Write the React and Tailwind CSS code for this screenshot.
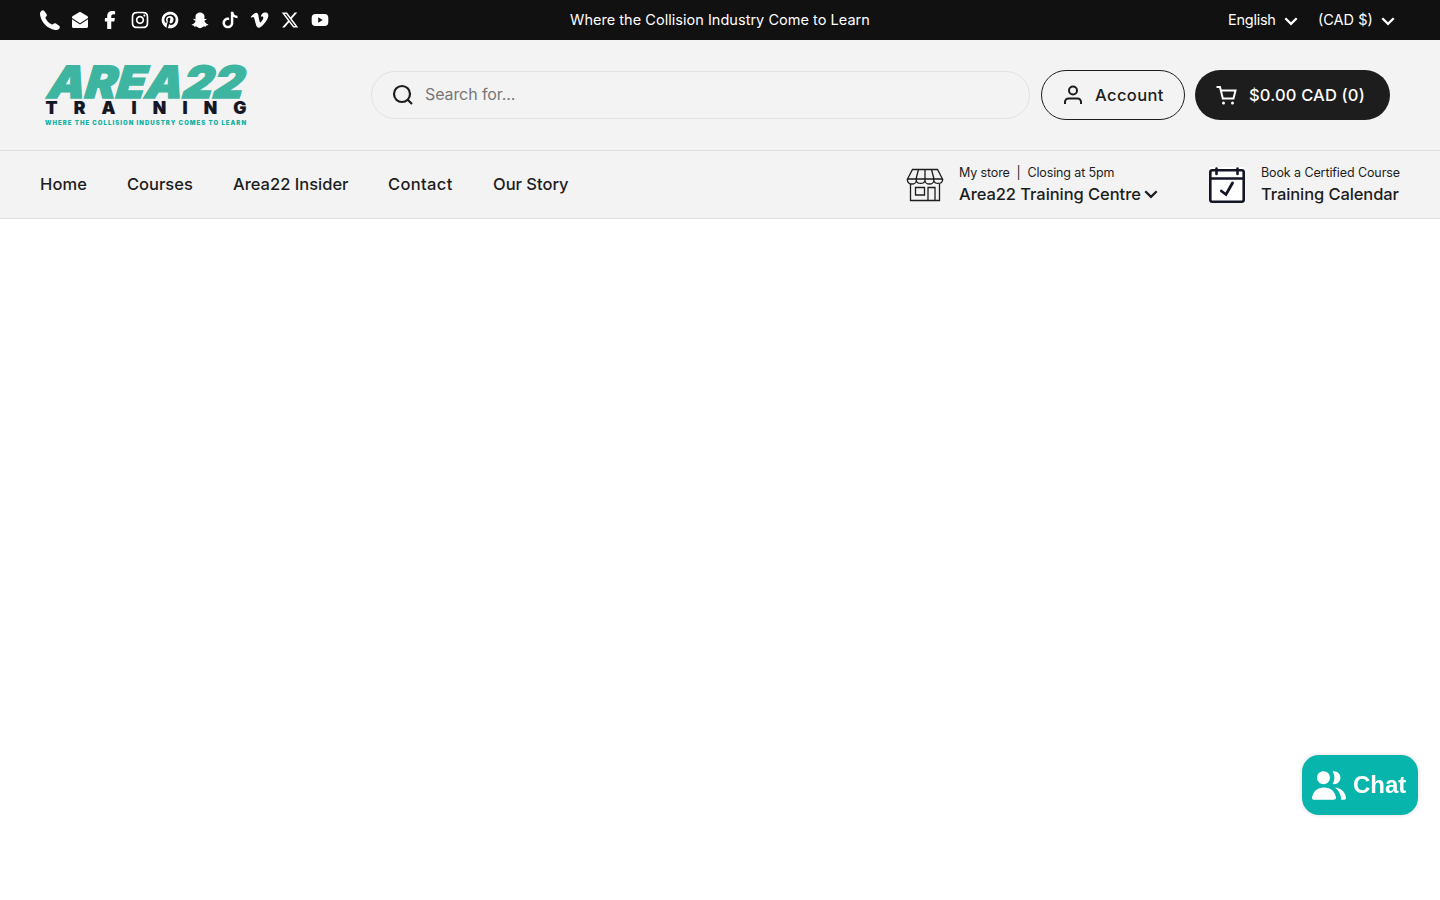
import React from "react";
import {
  RiInstagramLine,
  RiPinterestFill,
  RiSnapchatFill,
  RiTiktokFill,
  RiVimeoFill,
  RiTwitterXFill,
} from "react-icons/ri";
import { FaFacebookF } from "react-icons/fa6";

const PhoneIcon = () => (
  <svg className="w-5 h-5" viewBox="0 0 20 20" fill="currentColor">
    <path d="M1.200.9C2.200 0 3.500-.2 4.300.9l2.200 3.200c.6.9.4 1.700-.3 2.400-.8.7-.9 1.200-.5 2 1.300 2.600 3.200 4.500 5.800 5.800.8.4 1.300.3 2-.5.7-.7 1.500-.9 2.400-.3l3.200 2.200c1.100.8.9 2.100 0 3.100-1 1-2.300 1.400-4.100 1.100C7.500 18.700 1.300 12.500.1 5 -.2 3.200.2 1.900 1.200.9z" />
  </svg>
);

const MailOpenIcon = () => (
  <svg className="w-5 h-5" viewBox="0 0 20 20" fill="currentColor">
    <path d="M10 1.800 17.200 6.100c.5.3.8.8.8 1.500v.5L10 13.300 2 8.100v-.5c0-.7.3-1.200.8-1.500z" />
    <path d="M2 9.300 10 14.600 18 9.300v7.200c0 .9-.7 1.500-1.500 1.500h-13C2.700 18 2 17.400 2 16.500z" />
  </svg>
);

const YoutubeIcon = () => (
  <svg className="w-5 h-5" viewBox="0 0 20 20" fill="currentColor">
    <path fillRule="evenodd" d="M5.500 4h9A3.800 3.800 0 0 1 18.300 7.800v4.400a3.800 3.800 0 0 1-3.800 3.800h-9a3.800 3.800 0 0 1-3.800-3.800V7.800A3.800 3.800 0 0 1 5.500 4zM8.200 7.300v5.400l4.500-2.700z" />
  </svg>
);

const socials = [
  { name: "Phone", icon: <PhoneIcon /> },
  { name: "Email", icon: <MailOpenIcon /> },
  { name: "Facebook", icon: <FaFacebookF size={18} /> },
  { name: "Instagram", icon: <RiInstagramLine size={20} /> },
  { name: "Pinterest", icon: <RiPinterestFill size={20} /> },
  { name: "Snapchat", icon: <RiSnapchatFill size={20} /> },
  { name: "TikTok", icon: <RiTiktokFill size={20} /> },
  { name: "Vimeo", icon: <RiVimeoFill size={20} /> },
  { name: "X", icon: <RiTwitterXFill size={20} /> },
  { name: "YouTube", icon: <YoutubeIcon /> },
];

const links = [
  { name: "Home", style: "w-[47px] tracking-[0.1px]" },
  { name: "Courses", style: "w-[66px]" },
  { name: "Area22 Insider", style: "w-[115px]" },
  { name: "Contact", style: "w-[65px] tracking-[0.35px]" },
  { name: "Our Story", style: "w-[76px]" },
];

const Chevron = () => (
  <svg className="w-[14px] h-[9px] shrink-0 relative top-px" viewBox="0 0 14 9" fill="none" stroke="currentColor" strokeWidth={2.3}>
    <path d="M1.300 1.200 7 6.900l5.700-5.700" />
  </svg>
);

const Logo = () => (
  <svg className="w-[210px] h-[70px] overflow-visible" viewBox="0 0 210 70" fontFamily="Inter, sans-serif">
    <text transform="translate(4.500 0) skewX(-7)" x="7" y="37.500" fontSize="44.500" fontWeight="900" fontStyle="italic" fill="#3eb5a0" stroke="#3eb5a0" strokeWidth="1.500" textLength="196" lengthAdjust="spacingAndGlyphs">
      AREA22
    </text>
    <text x="5.500" y="54" fontSize="17.500" fontWeight="900" fill="#141625" stroke="#141625" strokeWidth="0.200" textLength="201">
      TRAINING
    </text>
    <text x="5" y="65" fontSize="6" fontWeight="900" fill="#14b1a4" textLength="201">
      WHERE THE COLLISION INDUSTRY COMES TO LEARN
    </text>
  </svg>
);

const StoreIcon = () => (
  <svg className="w-[38px] h-[34px] shrink-0" viewBox="0 0 38 34" fill="none" stroke="currentColor" strokeWidth={1.3}>
    <path d="M6.500 1.500h25l5 9.500h-35zM12.500 1.500 10 11M19 1.500V11M25.500 1.500 28 11" />
    <path d="M1.500 11v1.500a4.400 3.500 0 0 0 8.800 0V11v1.500a4.400 3.500 0 0 0 8.700 0V11v1.500a4.400 3.500 0 0 0 8.800 0V11v1.500a4.400 3.500 0 0 0 8.700 0V11" />
    <path d="M4.500 16v16.500h29V16M9.500 19.500h9v7.500h-9zM22 32.500v-13h7v13" />
  </svg>
);

const CalendarIcon = () => (
  <svg className="w-9 h-9 shrink-0" viewBox="0 0 36 36" fill="none" stroke="#141625" strokeWidth={2.6}>
    <rect width="36" height="36" fill="#fff" stroke="none" />
    <rect x="1.300" y="3.300" width="33.400" height="31.400" rx="2" />
    <path d="M1 11.500h34" />
    <path d="M7.500 1.500v5.500M28.500 1.500v5.500" strokeLinecap="round" />
    <path d="m12.300 24 4.700 3.500 6.500-11.500" strokeWidth={2.8} strokeLinecap="round" />
  </svg>
);

const ChatIcon = () => (
  <svg className="w-[34px] h-[29px]" viewBox="0 0 34 29" fill="currentColor">
    <circle cx="11.500" cy="6.700" r="6.500" />
    <path d="M0 26.500C1 20.500 5.500 16.400 12 16.400s11 4.100 12 10.100c.2 1.400-.7 2.200-2.300 2.200H2.300C.7 28.700-.2 27.900 0 26.500z" />
    <path d="M20.500.3c4.500-.7 7.900 2.400 7.900 6.400s-3.400 7.100-7.900 6.400c2.500-4 2.500-8.800 0-12.800z" />
    <path d="M23 16.500c5.700.4 10 4.200 11 9.700.3 1.500-.7 2.500-2.300 2.500h-2.500c-.1-5-2.200-9-6.200-12.200z" />
  </svg>
);

const App = () => {
  return (
    <div className="min-h-screen bg-white text-[#1d1d1d] font-['Inter',sans-serif]">
      {/* Announcement bar */}
      <div className="h-10 bg-[#111] text-white px-10 grid grid-cols-3 items-center text-[14.5px]">
        <div className="flex gap-[10px]">
          {socials.map((item) => (
            <a key={item.name} aria-label={item.name} className="w-5 h-5 flex items-center justify-center">{item.icon}</a>
          ))}
        </div>
        <p className="text-center whitespace-nowrap tracking-[0.03px]">Where the Collision Industry Come to Learn</p>
        <div className="flex items-center justify-end pr-[5px]">
          <button className="flex items-center justify-between w-[70px] tracking-[-0.25px]">English <Chevron /></button>
          <button className="flex items-center justify-between w-[77px] ml-5">(CAD $) <Chevron /></button>
        </div>
      </div>

      {/* Main header */}
      <header className="bg-[#f3f3f3]">
        <div className="h-[110px] pl-10 pr-[50px] flex items-center">
          <Logo />
          <div className="ml-[121px] w-[659px] h-12 rounded-full border border-[#e2e2e2] flex items-center pl-5">
            <svg className="w-[22px] h-[22px]" viewBox="0 0 22 22" fill="none" stroke="currentColor" strokeWidth={2.2}>
              <circle cx="10" cy="10" r="8" />
              <path d="m15.500 15.500 4.500 4.500" />
            </svg>
            <input placeholder="Search for..." className="ml-[11px] pb-0.5 bg-transparent outline-none text-base tracking-[-0.1px] placeholder:text-[#777]" />
          </div>
          <button className="ml-[11px] w-36 h-[50px] rounded-full border border-[#1d1d1d] flex items-center pl-5 text-[16.5px] font-[450]">
            <svg className="w-[22px] h-[22px]" viewBox="0 0 22 22" fill="none" stroke="currentColor" strokeWidth={2}>
              <circle cx="11" cy="6.500" r="4" />
              <path d="M3 20v-2a3.500 3.500 0 0 1 3.500-3.500h9A3.500 3.500 0 0 1 19 18v2" />
            </svg>
            <span className="ml-[11px] tracking-[0.4px]">Account</span>
          </button>
          <button className="ml-[10px] w-[195px] h-[50px] rounded-full bg-[#1d1d1d] text-white flex items-center pl-5 text-[16.5px] font-[450]">
            <svg className="w-[22px] h-[22px]" viewBox="0 0 22 22" fill="none" stroke="currentColor" strokeWidth={2}>
              <path d="M1.500 3H5l2.800 11.500h10.700l2-8H5.800" />
              <circle cx="8.500" cy="19" r="1.500" fill="currentColor" stroke="none" />
              <circle cx="17.500" cy="19" r="1.500" fill="currentColor" stroke="none" />
            </svg>
            <span className="ml-3 whitespace-nowrap tracking-[0.17px]">$0.00 CAD (0)</span>
          </button>
        </div>

        {/* Navigation */}
        <div className="h-[69px] px-10 pb-0.5 border-y border-[#dfdfdf] flex items-center justify-between">
          <nav className="flex gap-10 pt-0.5 text-[16.5px] font-[450]">
            {links.map((link) => (
              <a key={link.name} className={`whitespace-nowrap ${link.style}`}>{link.name}</a>
            ))}
          </nav>
          <div className="flex items-center">
            <div className="flex items-center w-[253px]">
              <div className="pt-0.5"><StoreIcon /></div>
              <div className="ml-[15px] whitespace-nowrap">
                <p className="text-[12.5px] leading-5 tracking-[-0.12px]">My store&nbsp; |&nbsp; Closing at 5pm</p>
                <p className="text-[16.5px] leading-[22px] font-[450] tracking-[-0.06px] flex items-center justify-between w-[199px]">Area22 Training Centre <Chevron /></p>
              </div>
            </div>
            <div className="flex items-center ml-[50px]">
              <div className="pt-0.5"><CalendarIcon /></div>
              <div className="ml-4 w-[139px] whitespace-nowrap">
                <p className="text-[12.5px] leading-5 tracking-[-0.1px]">Book a Certified Course</p>
                <p className="text-[16.5px] leading-[22px] font-[450] tracking-[-0.1px]">Training Calendar</p>
              </div>
            </div>
          </div>
        </div>
      </header>

      {/* Chat button */}
      <button className="fixed right-[22px] bottom-[85px] w-[116px] h-[60px] rounded-[17px] bg-[#08b5ad] text-white shadow-[0_0_4px_rgba(0,0,0,0.15)] flex items-center pl-[10px] gap-[7px]">
        <ChatIcon />
        <span className="font-['Liberation_Sans',sans-serif] font-bold text-2xl">Chat</span>
      </button>
    </div>
  );
};

export default App;
